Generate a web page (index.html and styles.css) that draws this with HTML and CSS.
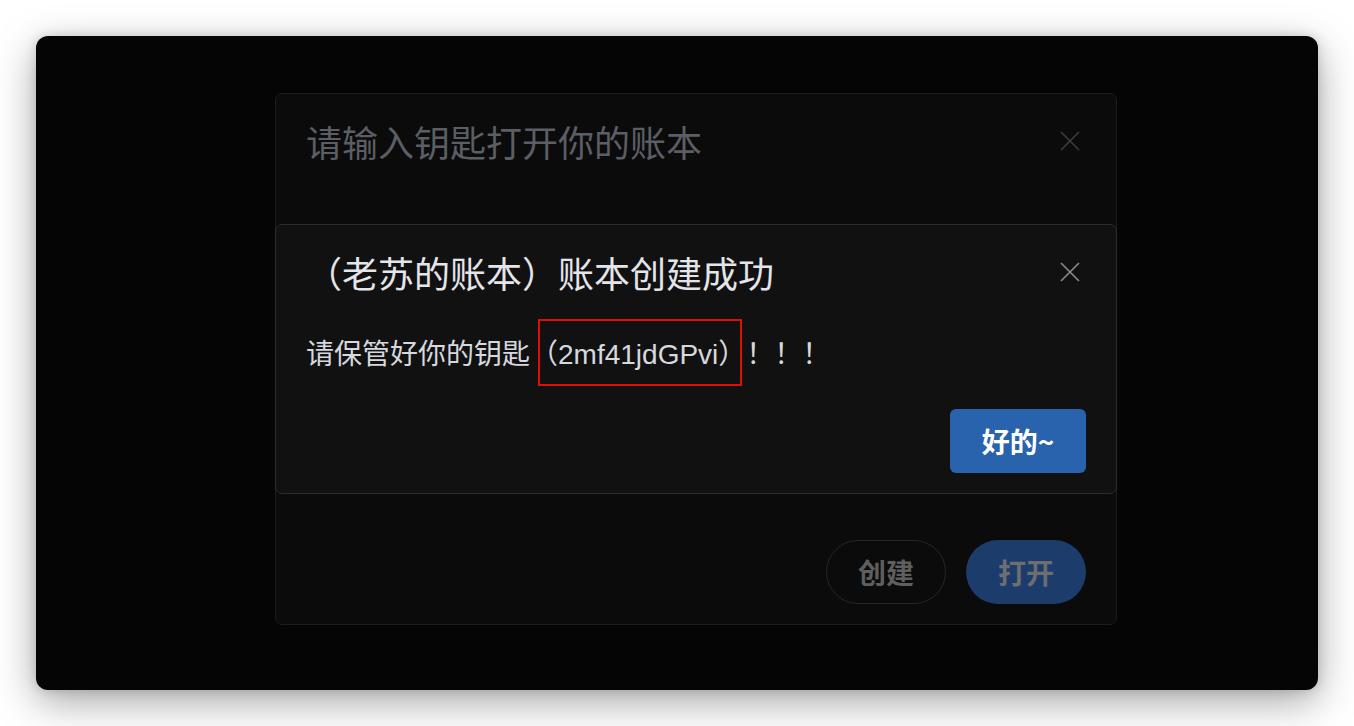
FILE: index.html
```html
<!DOCTYPE html>
<html lang="zh-CN">
<head>
<meta charset="utf-8">
<title>账本</title>
<link rel="stylesheet" href="styles.css">
</head>
<body>
<div class="window">
  <div class="stage">
    <section class="modal modal-back">
      <header class="modal-head">
        <h2 class="modal-title title-dim">请输入钥匙打开你的账本</h2>
        <button class="close close-dim" aria-label="关闭">
          <svg viewBox="0 0 20 20" width="20" height="20"><path d="M1 1L19 19M19 1L1 19" stroke="currentColor" stroke-width="1.6" fill="none"/></svg>
        </button>
      </header>
      <div class="modal-body-spacer"></div>
      <footer class="modal-foot">
        <button class="pill pill-ghost">创建</button>
        <button class="pill pill-primary">打开</button>
      </footer>
    </section>

    <section class="modal modal-front">
      <header class="modal-head">
        <h2 class="modal-title title-bright">（老苏的账本）账本创建成功</h2>
        <button class="close close-bright" aria-label="关闭">
          <svg viewBox="0 0 20 20" width="20" height="20"><path d="M1 1L19 19M19 1L1 19" stroke="currentColor" stroke-width="1.6" fill="none"/></svg>
        </button>
      </header>
      <div class="modal-body">
        <span>请保管好你的钥匙</span><span class="key">（2mf41jdGPvi）</span><span>！！！</span>
      </div>
      <footer class="modal-foot front-foot">
        <button class="ok">好的~</button>
      </footer>
    </section>
  </div>
</div>
</body>
</html>
```

FILE: styles.css
```css
* { box-sizing: border-box; }
html, body { margin: 0; padding: 0; }
body {
  width: 1354px;
  height: 726px;
  background: #ffffff;
  padding: 36px;
  font-family: "Liberation Sans", "Noto Sans CJK SC", sans-serif;
  overflow: hidden;
}
.window {
  width: 1282px;
  height: 654px;
  background: #050505;
  border-radius: 12px;
  box-shadow: 0 12px 40px rgba(0,0,0,0.35), 0 0 12px rgba(0,0,0,0.15);
  padding: 57px 0 0 239px;
}
.stage {
  position: relative;
  width: 842px;
}
.modal {
  border-radius: 7px;
  display: flex;
  flex-direction: column;
}
.modal-back {
  height: 532px;
  background: #0b0b0b;
  border: 1px solid #1d1d1d;
}
.modal-front {
  position: absolute;
  left: 0;
  top: 131px;
  width: 842px;
  height: 270px;
  background: #111111;
  border: 1px solid #2c2c2c;
}
.modal-head {
  display: flex;
  align-items: center;
  justify-content: space-between;
  padding: 23px 30px 0 30px;
}
.modal-title {
  margin: 0;
  font-family: "Noto Sans CJK SC", sans-serif;
  font-size: 36px;
  line-height: 48px;
  font-weight: 400;
}
.title-dim { color: #5b5e64; }
.title-bright { color: #e4e5ea; }
.close {
  width: 32px;
  height: 32px;
  padding: 0;
  border: 0;
  background: transparent;
  display: flex;
  align-items: center;
  justify-content: center;
  margin-top: 0;
}
.close-dim { color: #3c3c3c; }
.close-bright { color: #8c8c8c; }
.modal-body-spacer { flex: 1; }
.modal-foot {
  display: flex;
  justify-content: flex-end;
  gap: 20px;
  padding: 0 30px 20px 30px;
}
.pill {
  width: 120px;
  height: 64px;
  border-radius: 32px;
  font-family: "Noto Sans CJK SC", sans-serif;
  font-size: 28px;
  font-weight: 700;
  padding: 0;
}
.pill-ghost {
  background: transparent;
  border: 1px solid #262626;
  color: #5e5e5e;
}
.pill-primary {
  background: #1c3c6b;
  border: 0;
  color: #6c6e72;
}
.modal-body {
  display: flex;
  align-items: center;
  padding: 0 30px;
  margin-top: 39px;
  font-size: 28px;
  line-height: 40px;
  color: #d6d8de;
}
.key {
  position: relative;
}
.key::after {
  content: "";
  position: absolute;
  left: 8px;
  right: 4px;
  top: -16px;
  bottom: -11px;
  border: 2px solid #e00d0d;
}
.front-foot {
  margin-top: 34px;
}
.ok {
  width: 136px;
  height: 64px;
  border: 0;
  border-radius: 6px;
  background: #2962ad;
  color: #ffffff;
  font-family: "Noto Sans CJK SC", sans-serif;
  font-size: 28px;
  font-weight: 700;
  padding: 0;
}
```
